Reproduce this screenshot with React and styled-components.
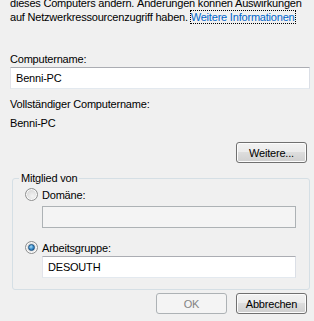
import styled, { createGlobalStyle } from "styled-components";

const GlobalStyle = createGlobalStyle`
  html, body {
    margin: 0;
    padding: 0;
    background: #f0f0f0;
  }
  body {
    font-family: "Liberation Sans", Arial, sans-serif;
    font-size: 11px;
    letter-spacing: -0.2px;
    color: #000;
  }
`;

const Dialog = styled.div`
  width: 314px;
  height: 321px;
  overflow: hidden;
  box-sizing: border-box;
  padding: 0 4px 0 10px;
  background: #f0f0f0;
  line-height: 14px;
`;

const Intro = styled.p`
  margin: -4px 0 0;
  white-space: nowrap;
`;

const Link = styled.a`
  color: #0066cc;
  outline: 1px dotted #000;
  outline-offset: 0;
  text-decoration: none;
`;

const Label = styled.div`
  margin-top: ${(p) => p.$top || 0}px;
`;

const TextBox = styled.div`
  box-sizing: border-box;
  height: 22px;
  margin-top: ${(p) => p.$top || 0}px;
  padding: 0 5px;
  display: flex;
  align-items: center;
  border: 1px solid;
  border-color: ${(p) =>
    p.$disabled ? "#adb2b5" : "#abadb3 #dbdfe6 #e3e9ef #e2e3ea"};
  background: ${(p) => (p.$disabled ? "#f4f4f4" : "#fff")};
`;

const ButtonRow = styled.div`
  display: flex;
  justify-content: flex-end;
  gap: 9px;
  margin-top: ${(p) => p.$top || 0}px;
  padding-right: 3px;
`;

const Button = styled.button`
  box-sizing: border-box;
  width: 71px;
  height: 21px;
  padding: 0;
  font: inherit;
  letter-spacing: inherit;
  border-radius: 3px;
  border: 1px solid ${(p) => (p.disabled ? "#adb2b5" : "#707070")};
  color: ${(p) => (p.disabled ? "#838383" : "#000")};
  background: ${(p) =>
    p.disabled
      ? "#f4f4f4"
      : "linear-gradient(#f2f2f2 0%, #ebebeb 50%, #dddddd 50%, #cfcfcf 100%)"};
  box-shadow: inset 0 0 0 1px ${(p) => (p.disabled ? "#f4f4f4" : "#fcfcfc")};
`;

const GroupBox = styled.fieldset`
  margin: ${(p) => p.$top || 0}px 0 0 2px;
  padding: 2px 13px 11px 6px;
  border: 1px solid #d5dfe5;
  border-radius: 3px;
  min-width: 0;
`;

const Legend = styled.legend`
  padding: 0 2px;
  line-height: 14px;
`;

const GroupBody = styled.div`
  padding-left: 23px;
`;

const RadioRow = styled.label`
  display: flex;
  align-items: center;
  gap: 4px;
  height: 15px;
  margin: ${(p) => p.$top || 0}px 0 0 -17px;
`;

const RadioDot = styled.span`
  box-sizing: border-box;
  width: 13px;
  height: 13px;
  border-radius: 50%;
  border: 1px solid #8e8f8f;
  background: radial-gradient(circle at 60% 65%, #f4f4f4 0%, #dcdcdc 60%, #c9c9c9 100%);
  box-shadow: inset 0 0 0 1px #fbfbfb;
  display: flex;
  align-items: center;
  justify-content: center;
  &::after {
    content: "";
    width: 5px;
    height: 5px;
    border-radius: 50%;
    border: 1px solid #1c5180;
    background: radial-gradient(circle at 40% 35%, #a9dbf6 0%, #3d91cf 50%, #124f8f 100%);
    display: ${(p) => (p.$checked ? "block" : "none")};
  }
`;

export default function App() {
  return (
    <>
      <GlobalStyle />
      <Dialog>
        <Intro>
          dieses Computers ändern. Änderungen können Auswirkungen
          <br />
          auf Netzwerkressourcenzugriff haben. <Link>Weitere Informationen</Link>
        </Intro>
        <Label $top={28}>Computername:</Label>
        <TextBox $top={1}>Benni-PC</TextBox>
        <Label $top={8}>Vollständiger Computername:</Label>
        <Label $top={5}>Benni-PC</Label>
        <ButtonRow $top={12}>
          <Button>Weitere...</Button>
        </ButtonRow>
        <GroupBox $top={8}>
          <Legend>Mitglied von</Legend>
          <GroupBody>
            <RadioRow>
              <RadioDot />
              Domäne:
            </RadioRow>
            <TextBox $top={4} $disabled />
            <RadioRow $top={12}>
              <RadioDot $checked />
              Arbeitsgruppe:
            </RadioRow>
            <TextBox $top={1}>DESOUTH</TextBox>
          </GroupBody>
        </GroupBox>
        <ButtonRow $top={3}>
          <Button disabled>OK</Button>
          <Button>Abbrechen</Button>
        </ButtonRow>
      </Dialog>
    </>
  );
}
